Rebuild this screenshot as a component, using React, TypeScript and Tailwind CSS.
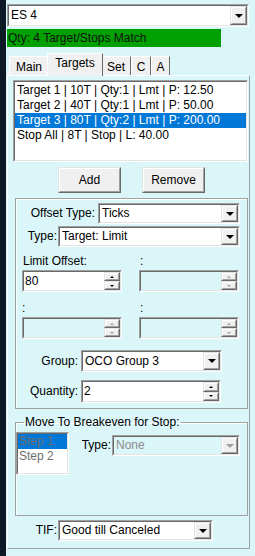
import React from "react";

const BG = "bg-[#daf6f8]";

const Arrow = ({ up, small, disabled }: { up?: boolean; small?: boolean; disabled?: boolean }) => {
  const color = disabled ? "border-t-[#a0a0a0]" : "border-t-black";
  const colorUp = disabled ? "border-b-[#a0a0a0]" : "border-b-black";
  if (small) {
    return up ? (
      <div className={`h-0 w-0 border-x-[2px] border-b-[2px] border-x-transparent ${colorUp}`} />
    ) : (
      <div className={`h-0 w-0 border-x-[2px] border-t-[2px] border-x-transparent ${color}`} />
    );
  }
  return <div className={`h-0 w-0 border-x-[4px] border-t-[4px] border-x-transparent ${color}`} />;
};

const Raised = ({ className = "", children }: { className?: string; children?: React.ReactNode }) => (
  <div
    className={`flex border border-t-[#e3e3e3] border-l-[#e3e3e3] border-b-[#696969] border-r-[#696969] ${className}`}
  >
    <div className="flex flex-1 items-center justify-center border border-t-white border-l-white border-b-[#a0a0a0] border-r-[#a0a0a0] bg-[#f0f0f0]">
      {children}
    </div>
  </div>
);

const Sunken = ({
  className = "",
  inner = "bg-white",
  children,
}: {
  className?: string;
  inner?: string;
  children?: React.ReactNode;
}) => (
  <div
    className={`flex border border-t-[#a0a0a0] border-l-[#a0a0a0] border-b-white border-r-white ${className}`}
  >
    <div
      className={`flex min-w-0 flex-1 border border-t-[#696969] border-l-[#696969] border-b-[#e3e3e3] border-r-[#e3e3e3] ${inner}`}
    >
      {children}
    </div>
  </div>
);

const Combo = ({ text, className = "", disabled }: { text: string; className?: string; disabled?: boolean }) => (
  <Sunken className={className} inner={disabled ? BG : "bg-white"}>
    <span className={`flex flex-1 items-center pl-[2px] ${disabled ? "text-[#8c8c8c]" : "text-black"}`}>{text}</span>
    <Raised className="w-[17px]">
      <Arrow disabled={disabled} />
    </Raised>
  </Sunken>
);

const Numeric = ({ text = "", className = "", disabled }: { text?: string; className?: string; disabled?: boolean }) => (
  <Sunken className={className} inner={disabled ? BG : "bg-white"}>
    <span className="flex flex-1 items-center pl-[1px]">{text}</span>
    <div className="flex w-[16px] flex-col">
      <Raised className="flex-1">
        <Arrow up small disabled={disabled} />
      </Raised>
      <Raised className="flex-1">
        <Arrow small disabled={disabled} />
      </Raised>
    </div>
  </Sunken>
);

const targets = [
  "Target 1 | 10T | Qty:1 | Lmt | P: 12.50",
  "Target 2 | 40T | Qty:1 | Lmt | P: 50.00",
  "Target 3 | 80T | Qty:2 | Lmt | P: 200.00",
  "Stop All | 8T | Stop | L: 40.00",
];

const tabs = [
  { label: "Main", w: "w-[40px]" },
  { label: "Targets", w: "w-[56px]", active: true },
  { label: "Set", w: "w-[30px]" },
  { label: "C", w: "w-[20px]" },
  { label: "A", w: "w-[19px]" },
];

export default function App() {
  return (
    <div
      className={`flex h-[556px] w-[255px] ${BG} font-['Liberation_Sans',Arial,sans-serif] text-[12px] leading-[15px] text-black`}
    >
      <div className="w-[6px] shrink-0 bg-[#0d1a26]" />
      <div className="flex w-[249px] flex-col pl-[1px] pt-[4px]">
        <Combo text="ES 4" className="h-[23px] w-[242px]" />

        <div className="mt-[2px] flex h-[18px] w-[214px] items-center bg-[#00a000] pl-[1px] text-[#111]">
          Qty: 4 Target/Stops Match
        </div>

        <div className="mt-[7px] flex h-[21px] items-end pl-[2px]">
          {tabs.map((t) =>
            t.active ? (
              <div
                key={t.label}
                className={`relative z-10 -mx-[2px] -mb-[1px] flex h-[23px] ${t.w} items-start justify-center border border-b-0 border-t-white border-l-white border-r-[#696969] bg-[#f0f0f0] pt-[2px]`}
              >
                {t.label}
              </div>
            ) : (
              <div
                key={t.label}
                className={`flex h-[19px] ${t.w} items-center justify-center border border-b-0 border-t-white border-l-white border-r-[#696969] bg-[#f0f0f0] pt-[2px]`}
              >
                {t.label}
              </div>
            )
          )}
        </div>

        <div className="flex h-[474px] w-[243px] flex-col border border-t-white border-l-white border-b-[#a0a0a0] border-r-[#a0a0a0]">
          <Sunken className="ml-[5px] mt-[4px] h-[82px] w-[235px]">
            <div className="flex flex-1 flex-col pt-[1px]">
              {targets.map((t, i) => (
                <div
                  key={t}
                  className={`h-[15px] whitespace-nowrap pl-[2px] ${i === 2 ? "bg-[#0078d7] text-white" : ""}`}
                >
                  {t}
                </div>
              ))}
            </div>
          </Sunken>

          <div className="mt-[5px] flex">
            <Raised className="ml-[50px] h-[26px] w-[63px]">Add</Raised>
            <Raised className="ml-[21px] h-[26px] w-[63px]">Remove</Raised>
          </div>

          <div className="ml-[7px] mt-[5px] flex h-[211px] w-[233px] flex-col border border-[#a0a0a0] shadow-[inset_1px_1px_0_#fff]">
            <div className="mt-[4px] flex items-center">
              <span className="w-[82px] pr-[3px] text-right">Offset Type:</span>
              <Combo text="Ticks" className="h-[21px] w-[142px]" />
            </div>
            <div className="mt-[2px] flex items-center">
              <span className="w-[42px] pr-[1px] text-right">Type:</span>
              <Combo text="Target: Limit" className="h-[21px] w-[182px]" />
            </div>

            <div className="mt-[7px] flex h-[15px]">
              <span className="ml-[7px] w-[117px]">Limit Offset:</span>
              <span>:</span>
            </div>
            <div className="mt-[1px] flex">
              <Numeric text="80" className="ml-[6px] h-[22px] w-[100px]" />
              <Numeric disabled className="ml-[17px] h-[22px] w-[100px]" />
            </div>

            <div className="mt-[9px] flex h-[15px]">
              <span className="ml-[6px] w-[118px]">:</span>
              <span>:</span>
            </div>
            <div className="mt-[1px] flex">
              <Numeric disabled className="ml-[6px] h-[22px] w-[100px]" />
              <Numeric disabled className="ml-[17px] h-[22px] w-[100px]" />
            </div>

            <div className="mt-[11px] flex items-center">
              <span className="w-[65px] pr-[3px] text-right">Group:</span>
              <Combo text="OCO Group 3" className="h-[22px] w-[141px]" />
            </div>
            <div className="mt-[8px] flex items-center">
              <span className="w-[65px] pr-[3px] text-right">Quantity:</span>
              <Numeric text="2" className="h-[23px] w-[140px]" />
            </div>
          </div>

          <fieldset className="ml-[7px] mt-[6px] h-[101px] w-[233px] border border-[#a0a0a0] shadow-[inset_1px_1px_0_#fff]">
            <legend className="ml-[8px] px-[1px] leading-[14px]">Move To Breakeven for Stop:</legend>
            <div className="mt-[3px] flex items-start">
              <Sunken className="h-[43px] w-[53px]">
                <div className="flex flex-1 flex-col text-[#6d6d6d]">
                  <div className="h-[15px] bg-[#0078d7] pl-[1px]">Step 1</div>
                  <div className="h-[15px] pl-[1px]">Step 2</div>
                </div>
              </Sunken>
              <div className="mt-[3px] flex items-center">
                <span className="w-[43px] pr-[1px] text-right">Type:</span>
                <Combo disabled text="None" className="h-[21px] w-[128px]" />
              </div>
            </div>
          </fieldset>

          <div className="mt-[4px] flex items-center">
            <span className="w-[50px] pr-[1px] text-right">TIF:</span>
            <Combo text="Good till Canceled" className="h-[21px] w-[155px]" />
          </div>
        </div>
      </div>
    </div>
  );
}
